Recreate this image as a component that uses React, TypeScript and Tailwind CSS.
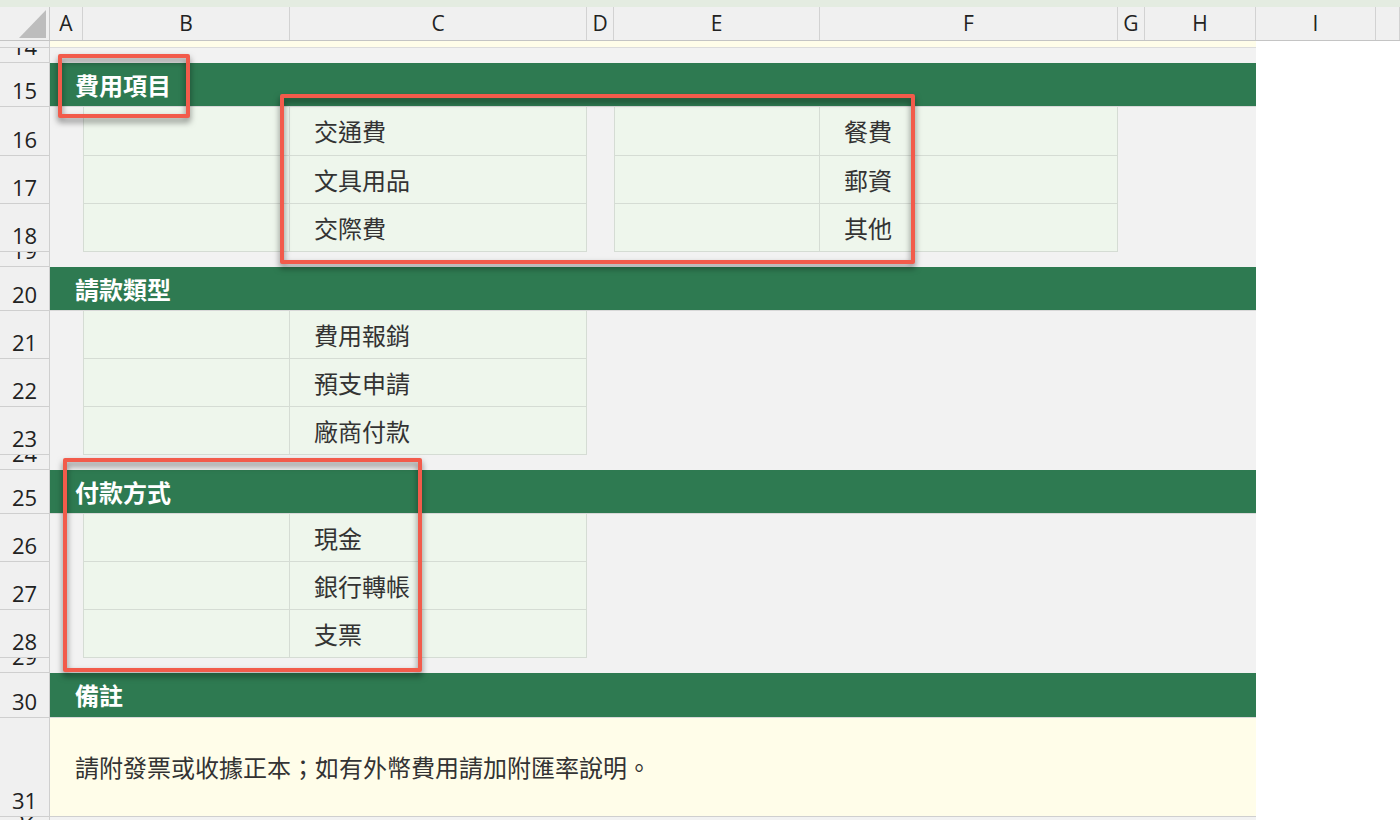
import React from "react";

type Row =
  | { n: number; h: number; kind: "top" | "gap" }
  | { n: number; h: number; kind: "head"; label: string }
  | { n: number; h: number; kind: "pair"; c: string; f: string }
  | { n: number; h: number; kind: "single"; c: string }
  | { n: number; h: number; kind: "note"; text: string };

const rows: Row[] = [
  { n: 13, h: 7, kind: "top" },
  { n: 14, h: 15, kind: "gap" },
  { n: 15, h: 44, kind: "head", label: "費用項目" },
  { n: 16, h: 49, kind: "pair", c: "交通費", f: "餐費" },
  { n: 17, h: 48, kind: "pair", c: "文具用品", f: "郵資" },
  { n: 18, h: 48, kind: "pair", c: "交際費", f: "其他" },
  { n: 19, h: 15, kind: "gap" },
  { n: 20, h: 44, kind: "head", label: "請款類型" },
  { n: 21, h: 48, kind: "single", c: "費用報銷" },
  { n: 22, h: 48, kind: "single", c: "預支申請" },
  { n: 23, h: 48, kind: "single", c: "廠商付款" },
  { n: 24, h: 15, kind: "gap" },
  { n: 25, h: 44, kind: "head", label: "付款方式" },
  { n: 26, h: 48, kind: "single", c: "現金" },
  { n: 27, h: 48, kind: "single", c: "銀行轉帳" },
  { n: 28, h: 48, kind: "single", c: "支票" },
  { n: 29, h: 15, kind: "gap" },
  { n: 30, h: 45, kind: "head", label: "備註" },
  { n: 31, h: 99, kind: "note", text: "請附發票或收據正本；如有外幣費用請加附匯率說明。" },
  { n: 32, h: 15, kind: "gap" },
];

const cols = [
  { l: "A", w: "w-[33px]" },
  { l: "B", w: "w-[207px]" },
  { l: "C", w: "w-[297px]" },
  { l: "D", w: "w-[27px]" },
  { l: "E", w: "w-[206px]" },
  { l: "F", w: "w-[298px]" },
  { l: "G", w: "w-[27px]" },
  { l: "H", w: "w-[111px]" },
  { l: "I", w: "w-[120px]" },
  { l: "", w: "flex-1" },
];

const cjk = "font-['Noto_Sans_CJK_TC','Noto_Sans',sans-serif]";
const cell = "h-full border-r border-b border-[#d5dcd4] bg-[#eef6ec] flex items-center pl-[24px] text-[24px] text-[#333] " + cjk;

function RowBody({ row }: { row: Row }) {
  switch (row.kind) {
    case "top":
      return <div className="w-[1206px] h-full bg-[#fffde9] border-b border-[#dcdcdc]" />;
    case "gap":
      return <div className="w-[1206px] h-full bg-[#f2f2f2]" />;
    case "head":
      return (
        <div
          className={`w-[1206px] h-full bg-[#2e7a51] border-b border-[#d8d8d8] flex items-center pl-[25px] text-white font-bold text-[24px] ${cjk}`}
        >
          {row.label}
        </div>
      );
    case "note":
      return (
        <div className={`w-[1206px] h-full bg-[#fffde9] border-b border-[#cfcfcf] flex items-center pl-[25px] text-[24px] text-[#333] ${cjk}`}>
          {row.text}
        </div>
      );
    case "pair":
      return (
        <div className="w-[1206px] h-full flex bg-[#f2f2f2]">
          <div className="w-[33px]" />
          <div className={`w-[207px] border-l ${cell}`} />
          <div className={`w-[297px] ${cell}`}>{row.c}</div>
          <div className="w-[27px]" />
          <div className={`w-[206px] border-l ${cell}`} />
          <div className={`w-[298px] ${cell}`}>{row.f}</div>
        </div>
      );
    case "single":
      return (
        <div className="w-[1206px] h-full flex bg-[#f2f2f2]">
          <div className="w-[33px]" />
          <div className={`w-[207px] border-l ${cell}`} />
          <div className={`w-[297px] ${cell}`}>{row.c}</div>
        </div>
      );
  }
}

function Callout({ cls }: { cls: string }) {
  return (
    <div
      className={`absolute border-[4px] border-[#f25b4b] rounded-[2px] drop-shadow-[0_4px_3px_rgba(0,0,0,0.5)] ${cls}`}
    />
  );
}

export default function App() {
  return (
    <div className="relative w-[1400px] h-[820px] overflow-hidden bg-white select-none">
      <div className="h-[7px] bg-[#e4ece1]" />

      {/* column headers */}
      <div className="flex h-[34px] bg-[#f0f0f0] border-b border-[#c4c4c4] font-['Open_Sans',sans-serif] text-[21px] text-[#222]">
        <div className="w-[50px] border-r border-[#c8c8c8] relative">
          <svg className="absolute left-[19px] top-[3px]" width="28" height="28" viewBox="0 0 28 28">
            <polygon points="27,0 27,28 0,28" fill="#bdbdbd" />
          </svg>
        </div>
        {cols.map((c, i) => (
          <div key={i} className={`${c.w} border-r border-[#d2d2d2] flex items-center justify-center leading-none`}>
            {c.l}
          </div>
        ))}
      </div>

      {/* sheet rows */}
      <div className="flex flex-col">
        {rows.map((r) => (
          <div key={r.n} className="flex" style={{ height: r.h }}>
            <div className="w-[50px] shrink-0 h-full bg-[#f0f0f0] border-r border-b border-[#cfcfcf] flex items-end justify-center overflow-hidden pb-[5px] font-['Open_Sans',sans-serif] text-[22px] leading-none text-[#222]">
              {r.h > 10 ? r.n : null}
            </div>
            <RowBody row={r} />
          </div>
        ))}
      </div>

      <Callout cls="left-[58px] top-[54px] w-[132px] h-[64px]" />
      <Callout cls="left-[280px] top-[94px] w-[635px] h-[170px]" />
      <Callout cls="left-[63px] top-[458px] w-[359px] h-[214px]" />
    </div>
  );
}
